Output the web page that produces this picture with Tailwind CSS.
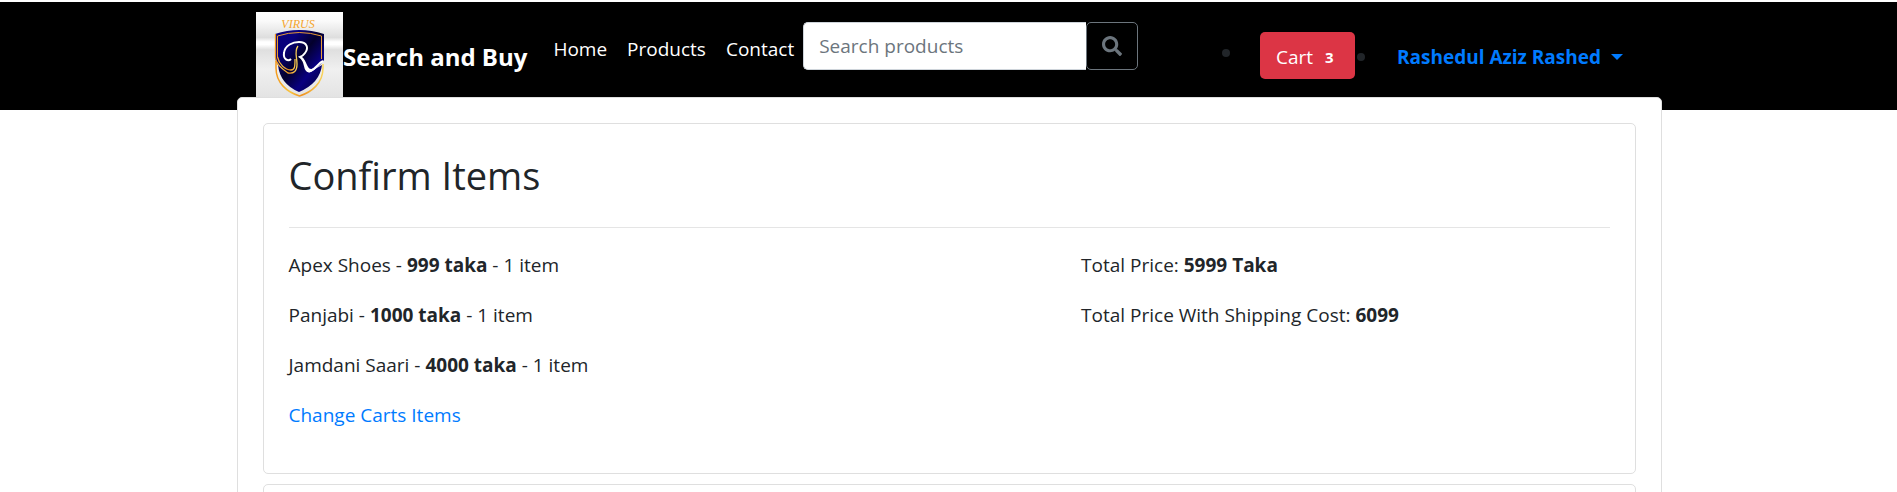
<!DOCTYPE html>
<html lang="en">
<head>
<meta charset="utf-8">
<meta name="viewport" content="width=device-width, initial-scale=1">
<title>Search and Buy</title>
<script src="https://cdn.jsdelivr.net/npm/@tailwindcss/browser@4"></script>
</head>
<body class="bg-white font-['Open_Sans','Noto_Sans',sans-serif] text-[19px] leading-[30px] text-[#212529]">
<header class="mt-[2px] h-[108px] bg-black">
  <div class="mx-auto flex max-w-[1425px] items-start px-5 pt-[10px]">
    <a href="#" class="flex items-center text-2xl font-bold text-white">
      <svg class="h-[88px] w-[87px] shrink-0" viewBox="0 0 87 88" role="img" aria-label="Virus logo">
        <defs>
          <linearGradient id="plate" x1="0" y1="0" x2="0" y2="1">
            <stop offset="0" stop-color="#fff"/><stop offset=".1" stop-color="#fafafa"/><stop offset=".29" stop-color="#dedede"/>
            <stop offset=".34" stop-color="#fff"/><stop offset=".37" stop-color="#fff"/><stop offset=".43" stop-color="#dfdfdf"/>
            <stop offset=".65" stop-color="#f0f0f0"/><stop offset="1" stop-color="#e2e2e2"/>
          </linearGradient>
          <linearGradient id="navy" x1="0" y1="0" x2="1" y2="1">
            <stop offset="0" stop-color="#09007a"/><stop offset=".25" stop-color="#08007c"/><stop offset=".48" stop-color="#03002c"/>
            <stop offset=".7" stop-color="#090080"/><stop offset="1" stop-color="#02002a"/>
          </linearGradient>
          <linearGradient id="gold" x1="0" y1="0" x2="1" y2="0">
            <stop offset="0" stop-color="#f39a1d"/><stop offset=".3" stop-color="#f9c440"/><stop offset=".55" stop-color="#ee9120"/><stop offset="1" stop-color="#f8d45c"/>
          </linearGradient>
        </defs>
        <rect width="87" height="88" fill="url(#plate)"/>
        <text x="42" y="16" text-anchor="middle" font-family="Liberation Serif, serif" font-style="italic" font-weight="400" font-size="12" fill="#f5a52c">VIRUS</text>
        <path d="M19 22Q43 14 68 22V48Q64 54 59 57L66 53Q64 71 43 80Q24 72 22 53Q19 49 19 42Z" fill="url(#navy)"/>
        <path d="M21.500 46V24Q43 17 65.500 24V47" fill="none" stroke="#e69a36" stroke-width="1"/>
        <path d="M19.500 22V46C20 52 26 57 32 61C38 62 41 59 41 52C41 45 38 39 42 34M21.500 45C23 52 29 58 35 58C39 58 39 54 39 47" fill="none" stroke="url(#gold)" stroke-width="1.300"/>
        <path d="M20 49V56C20 71 31 80 43.500 84C56 80 67 71 67 56V52" fill="none" stroke="url(#gold)" stroke-width="1.500"/>
        <path d="M35 47C32 50 27 47 28 41C29 33 37 30 43 30C51 30 53 36 49 41Q47 44 44 45Q48 48 49 54Q50 60 54 59C60 57 62 51 67 49" fill="none" stroke="#fff" stroke-width="2"/>
        <path d="M44 45Q48 49 49 54Q50 62 55 60C61 57 63 52 67 49C63 51 61 56 56 57C51 58 51 49 46 45Z" fill="#fff"/>
      </svg>
      <span class="whitespace-nowrap pt-[2px]">Search and Buy</span>
    </a>
    <nav class="ml-[26px] flex gap-5 pt-[22px] text-white">
      <a href="#">Home</a>
      <a href="#">Products</a>
      <a href="#">Contact</a>
    </nav>
    <form class="ml-[9px] mt-[10px] flex">
      <input type="text" aria-label="Search products" placeholder="Search products" class="h-12 w-[283px] rounded-l-[5px] border border-r-0 border-[#ced4da] bg-white px-[15px] placeholder:text-[#6c757d]">
      <button type="button" aria-label="Search" class="flex h-12 w-[52px] items-center justify-center rounded-[5px] border border-[#6c757d] text-[#6c757d]">
        <svg class="size-5" viewBox="0 0 512 512" fill="currentColor"><path d="M505 442.700L405.300 343c-4.500-4.500-10.600-7-17-7H372c27.600-35.300 44-79.700 44-128C416 93.100 322.900 0 208 0S0 93.100 0 208s93.100 208 208 208c48.300 0 92.700-16.400 128-44v16.300c0 6.400 2.500 12.500 7 17l99.700 99.700c9.400 9.400 24.600 9.400 33.900 0l28.300-28.300c9.400-9.400 9.400-24.600.1-34zM208 336c-70.700 0-128-57.200-128-128 0-70.700 57.200-128 128-128 70.700 0 128 57.200 128 128 0 70.700-57.200 128-128 128z"/></svg>
      </button>
    </form>
    <div class="ml-auto mt-5 flex items-center">
      <span class="mb-[6px] mr-[30px] size-2 rounded-full bg-[#212529]"></span>
      <a href="#" class="flex h-[47px] w-[95px] items-center gap-3 rounded-[5px] bg-[#dc3545] pl-4 pt-[2px] text-white">Cart <span class="text-[15px] font-bold">3</span></a>
      <span class="ml-[2px] mr-8 mt-[2px] size-2 rounded-full bg-[#212529]"></span>
      <button type="button" class="mr-[18px] flex items-center gap-[10px] whitespace-nowrap pt-[2px] font-bold text-[#007bff]">Rashedul Aziz Rashed
        <svg class="h-[6px] w-3" viewBox="0 0 12 6" fill="currentColor"><path d="M0 0H12L6 6Z"/></svg>
      </button>
    </div>
  </div>
</header>
<div class="relative -mt-[13px] pl-px">
<main class="mx-auto max-w-[1425px] rounded-[5px] border border-[#dfdfdf] bg-white p-[25px]">
  <section class="rounded-[5px] border border-[#dfdfdf] px-[25px] pb-[43px] pt-[27px]">
    <h1 class="text-[38px] leading-[48px]">Confirm Items</h1>
    <hr class="mb-[22px] mt-[28px] border-[#e5e5e5]">
    <div class="grid grid-cols-5">
      <div class="col-span-3 space-y-5">
        <p>Apex Shoes - <b>999 taka</b> - 1 item</p>
        <p>Panjabi - <b>1000 taka</b> - 1 item</p>
        <p>Jamdani Saari - <b>4000 taka</b> - 1 item</p>
        <p><a href="#" class="text-[#007bff]">Change Carts Items</a></p>
      </div>
      <div class="col-span-2 space-y-5">
        <p>Total Price: <b>5999 Taka</b></p>
        <p>Total Price With Shipping Cost: <b>6099</b></p>
      </div>
    </div>
  </section>
  <section class="mt-[10px] min-h-20 rounded-[5px] border border-[#dfdfdf]"></section>
</main>
</div>
</body>
</html>
